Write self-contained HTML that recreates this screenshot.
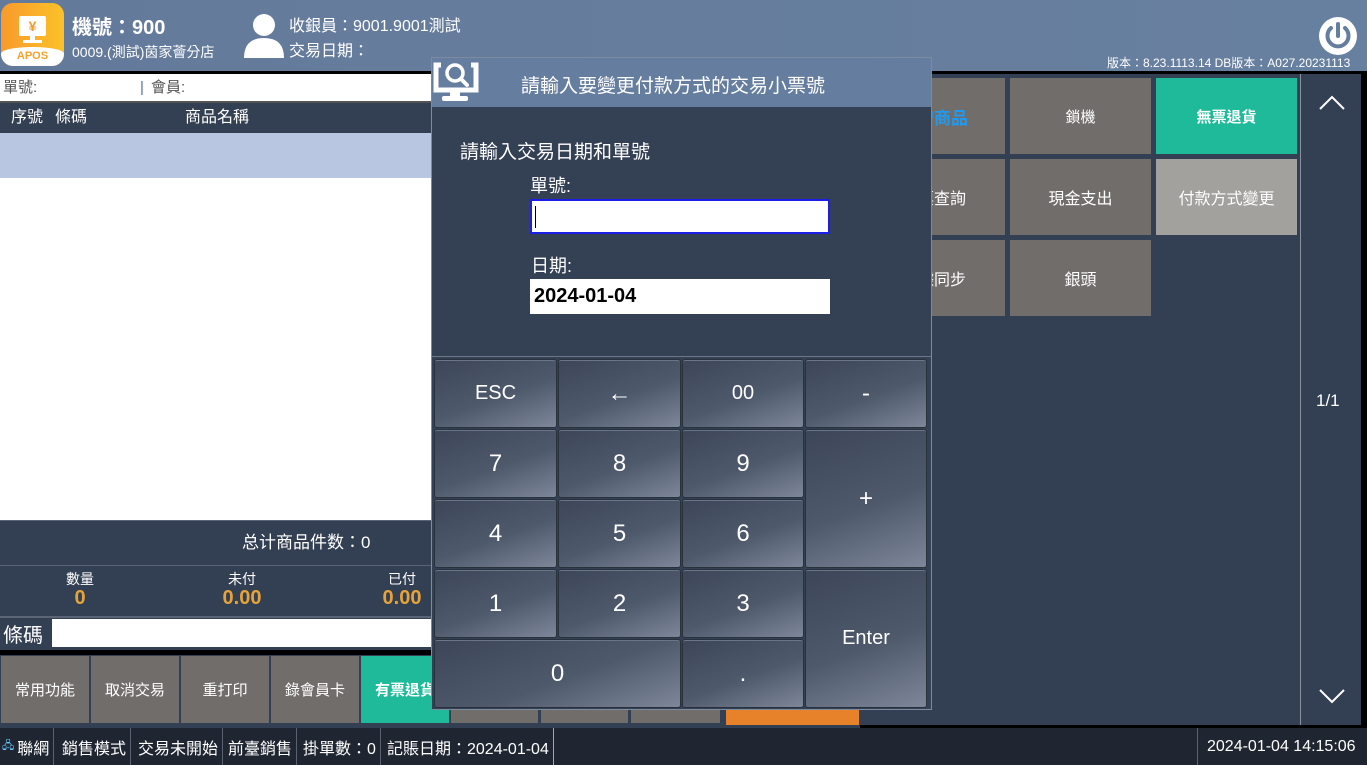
<!DOCTYPE html>
<html><head><meta charset="utf-8"><style>
*{margin:0;padding:0;box-sizing:border-box}
body{width:1367px;height:765px;overflow:hidden;background:#333f52;font-family:"Liberation Sans","Noto Sans CJK TC",sans-serif;color:#fff;position:relative}
.a{position:absolute}
.btn{position:absolute;background:#716d6b;display:flex;align-items:center;justify-content:center;font-size:15px;white-space:nowrap}
.key{position:absolute;display:flex;align-items:center;justify-content:center;font-size:24px;border-radius:3px;border:1px solid #29313d;background:linear-gradient(160deg,#3c4658 0%,#4e596b 55%,#7d8799 100%);box-shadow:inset 0 1px 0 #6a7588}
.st{position:absolute;top:728px;height:37px;display:flex;align-items:center;font-size:16px;border-right:1px solid #5a6270;padding:0 4px}
</style></head><body>
<div class="a" style="left:0;top:0;width:1367px;height:71px;background:linear-gradient(90deg,#647a9b,#6880a0)"></div>
<div class="a" style="left:0;top:71px;width:1367px;height:3px;background:#000"></div>
<div class="a" style="left:1px;top:3px;width:63px;height:63px;border-radius:12px;background:linear-gradient(90deg,#f89a2c,#fcc12a);overflow:hidden">
 <div class="a" style="left:0;top:44px;width:63px;height:22px;background:#fff;border-radius:50% 50% 0 0/30% 30% 0 0"></div>
 <div class="a" style="left:0;top:47px;width:63px;font-size:11px;font-weight:bold;color:#f4a22c;text-align:center">APOS</div>
 <div class="a" style="left:18px;top:13px;width:27px;height:20px;background:#fff;border-radius:2px;color:#f59b2c;font-size:14px;font-weight:bold;text-align:center;line-height:20px">¥</div>
 <div class="a" style="left:29px;top:33px;width:5px;height:5px;background:#fff"></div>
 <div class="a" style="left:22px;top:37px;width:19px;height:3px;background:#fff"></div>
</div>
<div class="a" style="left:72px;top:11px;font-size:20px;font-weight:bold">機號：900</div>
<div class="a" style="left:72px;top:42px;font-size:14px">0009.(測試)茵家薈分店</div>
<svg class="a" style="left:242px;top:12px" width="46" height="46" viewBox="0 0 46 46"><circle cx="22" cy="13" r="11" fill="#fff"/><path d="M2 46 Q2 26 22 26 Q42 26 42 46 Z" fill="#fff"/></svg>
<div class="a" style="left:289px;top:12px;font-size:16px">收銀員：9001.9001測試</div>
<div class="a" style="left:289px;top:37px;font-size:16px">交易日期：</div>
<svg class="a" style="left:1318px;top:16px" width="40" height="40" viewBox="0 0 40 40"><circle cx="20" cy="20" r="19" fill="#fff"/><path d="M13 12 A10.5 10.5 0 1 0 27 12" stroke="#657d9e" stroke-width="4" fill="none" stroke-linecap="round"/><line x1="20" y1="8" x2="20" y2="20" stroke="#657d9e" stroke-width="4" stroke-linecap="round"/></svg>
<div class="a" style="left:1107px;top:54px;font-size:12px">版本：8.23.1113.14 DB版本：A027.20231113</div>
<div class="a" style="left:0;top:74px;width:432px;height:27px;background:#fff;color:#555;font-size:15px;line-height:27px;padding-left:3px">單號:<span style="position:absolute;left:140px;color:#4a6fa5">|</span><span style="position:absolute;left:151px">會員:</span></div>
<div class="a" style="left:0;top:101px;width:432px;height:2px;background:#555"></div>
<div class="a" style="left:0;top:103px;width:432px;height:30px;background:#333f52;font-size:16px;line-height:30px"><span class="a" style="left:11px">序號</span><span class="a" style="left:55px">條碼</span><span class="a" style="left:185px">商品名稱</span></div>
<div class="a" style="left:0;top:133px;width:432px;height:45px;background:#b8c6e1"></div>
<div class="a" style="left:0;top:178px;width:432px;height:342px;background:#fff"></div>
<div class="a" style="left:0;top:520px;width:432px;height:46px;background:#333f52;border-top:1px solid #5a6475;border-bottom:1px solid #5a6475;font-size:17px;line-height:44px"><span class="a" style="left:242px">总计商品件数：0</span></div>
<div class="a" style="left:0;top:567px;width:432px;height:49px;background:#333f52">
 <div class="a" style="left:48px;top:2px;width:64px;text-align:center;font-size:14px">數量</div>
 <div class="a" style="left:48px;top:20px;width:64px;text-align:center;font-size:20px;font-weight:bold;color:#e5a33a">0</div>
 <div class="a" style="left:200px;top:2px;width:84px;text-align:center;font-size:14px">未付</div>
 <div class="a" style="left:200px;top:20px;width:84px;text-align:center;font-size:20px;font-weight:bold;color:#e5a33a">0.00</div>
 <div class="a" style="left:360px;top:2px;width:84px;text-align:center;font-size:14px">已付</div>
 <div class="a" style="left:360px;top:20px;width:84px;text-align:center;font-size:20px;font-weight:bold;color:#e5a33a">0.00</div>
</div>
<div class="a" style="left:0;top:616px;width:432px;height:2px;background:#5a6475"></div>
<div class="a" style="left:3px;top:619px;font-size:20px">條碼</div>
<div class="a" style="left:52px;top:619px;width:390px;height:28px;background:#fff"></div>
<div class="a" style="left:0;top:650px;width:860px;height:5px;background:#000"></div>
<div class="btn" style="left:1px;top:656px;width:88px;height:67px">常用功能</div>
<div class="btn" style="left:91px;top:656px;width:88px;height:67px">取消交易</div>
<div class="btn" style="left:181px;top:656px;width:88px;height:67px">重打印</div>
<div class="btn" style="left:271px;top:656px;width:88px;height:67px">錄會員卡</div>
<div class="btn" style="left:361px;top:656px;width:88px;height:67px;background:#1fba99;font-weight:bold">有票退貨</div>
<div class="btn" style="left:451px;top:656px;width:87px;height:67px"></div>
<div class="btn" style="left:541px;top:656px;width:87px;height:67px"></div>
<div class="btn" style="left:631px;top:656px;width:89px;height:67px"></div>
<div class="a" style="left:726px;top:690px;width:133px;height:35px;background:#e8822a"></div>
<div class="a" style="left:860px;top:74px;width:501px;height:654px;background:#333f52"></div>
<div class="a" style="left:1361px;top:71px;width:6px;height:660px;background:#000"></div>
<div class="a" style="left:860px;top:725px;width:507px;height:4px;background:#000"></div>
<div class="a" style="left:1300px;top:74px;width:1px;height:651px;background:#8a929e"></div>
<svg class="a" style="left:1318px;top:95px" width="28" height="16"><path d="M2 14 L14 2 L26 14" stroke="#fff" stroke-width="2" fill="none"/></svg>
<svg class="a" style="left:1318px;top:688px" width="28" height="16"><path d="M2 2 L14 14 L26 2" stroke="#fff" stroke-width="2" fill="none"/></svg>
<div class="a" style="left:1316px;top:391px;font-size:17px">1/1</div>
<div class="btn" style="left:863px;top:78px;width:142px;height:76px;color:#1e9bf0;font-weight:bold;font-size:17px">新增商品</div>
<div class="btn" style="left:1010px;top:78px;width:141px;height:76px">鎖機</div>
<div class="btn" style="left:1156px;top:78px;width:141px;height:76px;background:#1fba99;font-weight:bold">無票退貨</div>
<div class="btn" style="left:863px;top:159px;width:142px;height:76px;font-size:16px">小票查詢</div>
<div class="btn" style="left:1010px;top:159px;width:141px;height:76px;font-size:16px">現金支出</div>
<div class="btn" style="left:1156px;top:159px;width:141px;height:76px;background:#a3a19d;font-size:16px">付款方式變更</div>
<div class="btn" style="left:863px;top:240px;width:142px;height:76px;font-size:16px">數據同步</div>
<div class="btn" style="left:1010px;top:240px;width:141px;height:76px;font-size:16px">銀頭</div>
<div class="a" style="left:0;top:728px;width:1367px;height:37px;background:#1f2631"></div>
<div class="st" style="left:0;padding-left:2px"><span style="font-size:11px;color:#6cf;margin-right:3px">🖧</span>聯網</div>
<div class="st" style="left:58px">銷售模式</div>
<div class="st" style="left:134px">交易未開始</div>
<div class="st" style="left:224px">前臺銷售</div>
<div class="st" style="left:299px">掛單數：0</div>
<div class="st" style="left:383px;border-right:1px solid #9aa">記賬日期：2024-01-04</div>
<div class="st" style="left:1197px;border-right:none;border-left:1px solid #5a6270;padding-left:9px">2024-01-04 14:15:06</div>
<div class="a" style="left:431px;top:57px;width:501px;height:653px;background:#344054;border:1px solid #7d8ba0"></div>
<div class="a" style="left:432px;top:58px;width:499px;height:49px;background:#657d9f"></div>
<svg class="a" style="left:433px;top:60px" width="46" height="44" viewBox="0 0 46 44"><path d="M8 5 H3 V30 H43 V5 H38" stroke="#fff" stroke-width="5" fill="none"/><rect x="17" y="30" width="10" height="7" fill="#fff"/><rect x="9" y="36" width="26" height="5" rx="2" fill="#fff"/><circle cx="22" cy="13" r="8" stroke="#fff" stroke-width="3.5" fill="none"/><line x1="28" y1="19" x2="34" y2="25" stroke="#fff" stroke-width="4" stroke-linecap="round"/></svg>
<div class="a" style="left:521px;top:71px;font-size:19px">請輸入要變更付款方式的交易小票號</div>
<div class="a" style="left:460px;top:137px;font-size:19px">請輸入交易日期和單號</div>
<div class="a" style="left:530px;top:172px;font-size:18px">單號:</div>
<div class="a" style="left:530px;top:199px;width:300px;height:35px;background:#fff;border:2px solid #1a1ee6"><div class="a" style="left:3px;top:5px;width:1px;height:22px;background:#000"></div></div>
<div class="a" style="left:531px;top:252px;font-size:18px">日期:</div>
<div class="a" style="left:530px;top:279px;width:300px;height:35px;background:#fff;color:#000;font-size:20px;font-weight:bold;line-height:35px;padding-left:4px">2024-01-04</div>
<div class="a" style="left:432px;top:356px;width:499px;height:1px;background:#6c7789"></div>
<div class="key" style="left:434px;top:359px;width:123px;height:69px;font-size:20px">ESC</div>
<div class="key" style="left:558px;top:359px;width:123px;height:69px">←</div>
<div class="key" style="left:682px;top:359px;width:122px;height:69px;font-size:20px">00</div>
<div class="key" style="left:805px;top:359px;width:122px;height:69px">-</div>
<div class="key" style="left:434px;top:429px;width:123px;height:69px">7</div>
<div class="key" style="left:558px;top:429px;width:123px;height:69px">8</div>
<div class="key" style="left:682px;top:429px;width:122px;height:69px">9</div>
<div class="key" style="left:805px;top:429px;width:122px;height:139px">+</div>
<div class="key" style="left:434px;top:499px;width:123px;height:69px">4</div>
<div class="key" style="left:558px;top:499px;width:123px;height:69px">5</div>
<div class="key" style="left:682px;top:499px;width:122px;height:69px">6</div>
<div class="key" style="left:434px;top:569px;width:123px;height:69px">1</div>
<div class="key" style="left:558px;top:569px;width:123px;height:69px">2</div>
<div class="key" style="left:682px;top:569px;width:122px;height:69px">3</div>
<div class="key" style="left:805px;top:569px;width:122px;height:139px;font-size:20px">Enter</div>
<div class="key" style="left:434px;top:639px;width:247px;height:69px">0</div>
<div class="key" style="left:682px;top:639px;width:122px;height:69px">.</div>
</body></html>
